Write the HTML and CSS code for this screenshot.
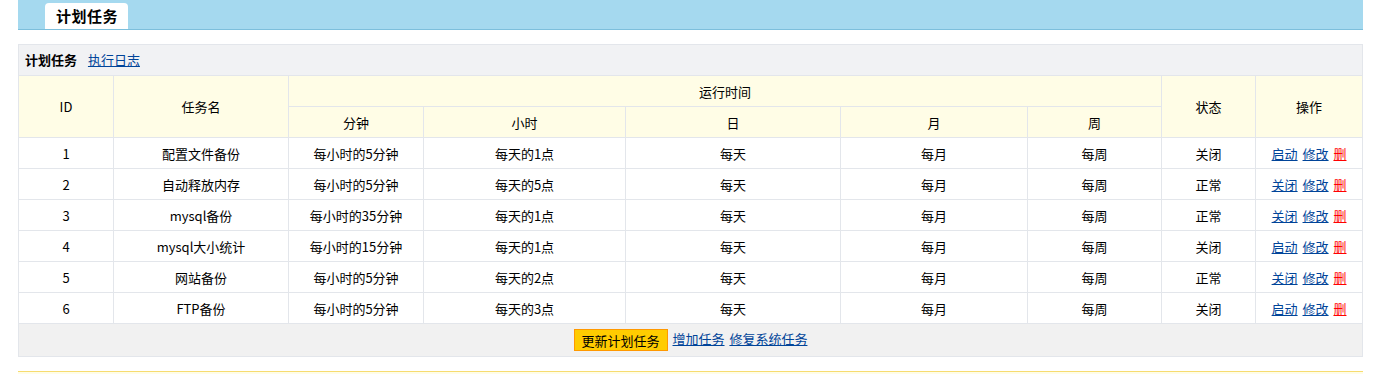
FILE: index.html
```html
<!DOCTYPE html>
<html lang="zh-CN">
<head>
  <meta charset="UTF-8">
  <title>计划任务</title>
  <link rel="stylesheet" href="styles.css">
</head>
<body>
  <div class="page">
    <div class="top-bar">
      <div class="top-tab">计划任务</div>
    </div>

    <div class="panel">
      <div class="panel-title">
        <b>计划任务</b>
        <a href="#">执行日志</a>
      </div>
      <table class="task-table">
        <colgroup>
          <col style="width: 95px">
          <col style="width: 175px">
          <col style="width: 135px">
          <col style="width: 202px">
          <col style="width: 215px">
          <col style="width: 187px">
          <col style="width: 134px">
          <col style="width: 94px">
          <col style="width: 107px">
        </colgroup>
        <thead>
          <tr>
            <th rowspan="2">ID</th>
            <th rowspan="2">任务名</th>
            <th colspan="5">运行时间</th>
            <th rowspan="2">状态</th>
            <th rowspan="2">操作</th>
          </tr>
          <tr>
            <th>分钟</th>
            <th>小时</th>
            <th>日</th>
            <th>月</th>
            <th>周</th>
          </tr>
        </thead>
        <tbody>
          <tr>
            <td>1</td><td>配置文件备份</td><td>每小时的5分钟</td><td>每天的1点</td><td>每天</td><td>每月</td><td>每周</td><td>关闭</td>
            <td class="ops"><a href="#">启动</a> <a href="#">修改</a> <a href="#" class="del">删</a></td>
          </tr>
          <tr>
            <td>2</td><td>自动释放内存</td><td>每小时的5分钟</td><td>每天的5点</td><td>每天</td><td>每月</td><td>每周</td><td>正常</td>
            <td class="ops"><a href="#">关闭</a> <a href="#">修改</a> <a href="#" class="del">删</a></td>
          </tr>
          <tr>
            <td>3</td><td>mysql备份</td><td>每小时的35分钟</td><td>每天的1点</td><td>每天</td><td>每月</td><td>每周</td><td>正常</td>
            <td class="ops"><a href="#">关闭</a> <a href="#">修改</a> <a href="#" class="del">删</a></td>
          </tr>
          <tr>
            <td>4</td><td>mysql大小统计</td><td>每小时的15分钟</td><td>每天的1点</td><td>每天</td><td>每月</td><td>每周</td><td>关闭</td>
            <td class="ops"><a href="#">启动</a> <a href="#">修改</a> <a href="#" class="del">删</a></td>
          </tr>
          <tr>
            <td>5</td><td>网站备份</td><td>每小时的5分钟</td><td>每天的2点</td><td>每天</td><td>每月</td><td>每周</td><td>正常</td>
            <td class="ops"><a href="#">关闭</a> <a href="#">修改</a> <a href="#" class="del">删</a></td>
          </tr>
          <tr>
            <td>6</td><td>FTP备份</td><td>每小时的5分钟</td><td>每天的3点</td><td>每天</td><td>每月</td><td>每周</td><td>关闭</td>
            <td class="ops"><a href="#">启动</a> <a href="#">修改</a> <a href="#" class="del">删</a></td>
          </tr>
        </tbody>
        <tfoot>
          <tr>
            <td colspan="9">
              <button class="btn-update">更新计划任务</button>
              <a href="#">增加任务</a>
              <a href="#">修复系统任务</a>
            </td>
          </tr>
        </tfoot>
      </table>
    </div>

    <div class="notice"></div>
  </div>
</body>
</html>
```

FILE: styles.css
```css
* {
  box-sizing: border-box;
  margin: 0;
  padding: 0;
}

body {
  font-family: "Noto Sans CJK SC", "DejaVu Sans", sans-serif;
  font-size: 13px;
  color: #000;
  background: #fff;
}

a {
  color: #004499;
  text-decoration: underline;
}

.page {
  width: 1345px;
  margin-left: 18px;
}

.top-bar {
  height: 30px;
  background: #a5d9ef;
  border-bottom: 1px solid #7dbfdc;
  padding: 3px 0 0 27px;
}

.top-tab {
  display: inline-block;
  width: 83px;
  height: 26px;
  line-height: 26px;
  padding-left: 11px;
  background: #fff;
  border-radius: 4px 4px 0 0;
  font-size: 15px;
  font-weight: bold;
  letter-spacing: 0.5px;
}

.panel {
  margin-top: 14px;
}

.panel-title {
  height: 31px;
  line-height: 30px;
  background: #f1f2f4;
  border: 1px solid #e3e6eb;
  border-bottom: none;
  padding-left: 6px;
}

.panel-title b {
  margin-right: 8px;
}

.task-table {
  width: 1345px;
  border-collapse: collapse;
  table-layout: fixed;
}

.task-table th,
.task-table td {
  border: 1px solid #e3e6eb;
  height: 31px;
  text-align: center;
  font-weight: normal;
  white-space: nowrap;
}

.task-table thead th {
  background: #fffde6;
}

.ops {
  word-spacing: 2px;
}

.ops a.del {
  color: #ff0000;
}

.task-table tfoot td {
  height: 33px;
  background: #f1f1f1;
  word-spacing: 2px;
}

.btn-update {
  font-family: inherit;
  font-size: 13px;
  width: 94px;
  height: 22px;
  background: #ffcc00;
  border: 1px solid #ff9900;
  color: #000;
  vertical-align: middle;
  word-spacing: 0;
}

.notice {
  margin-top: 14px;
  height: 20px;
  background: #fffde8;
  border-top: 1px solid #f7dc70;
}
```
